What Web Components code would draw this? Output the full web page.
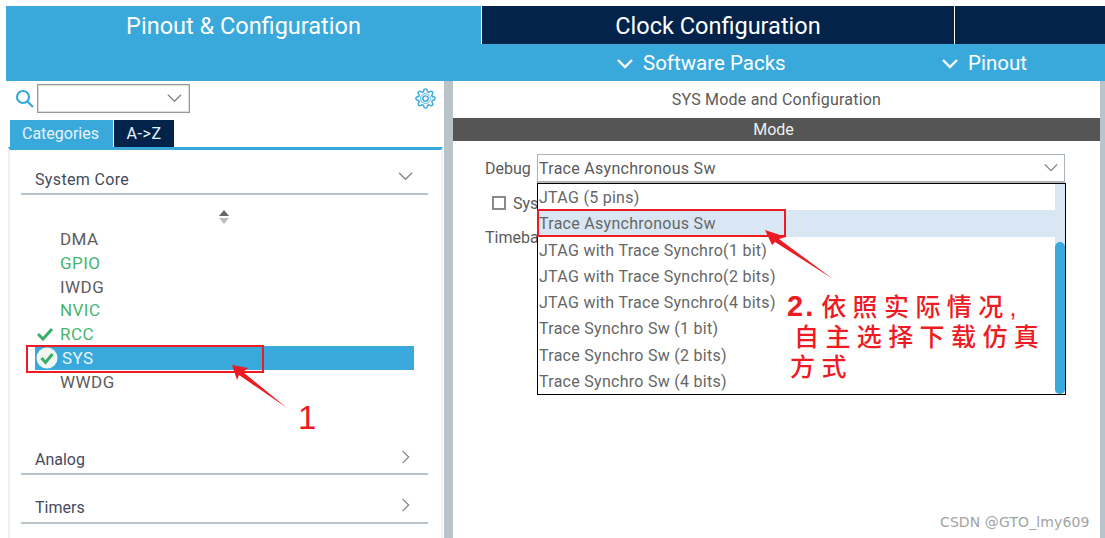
<!DOCTYPE html>
<html lang="en">
<head>
<meta charset="utf-8">
<title>SYS Mode and Configuration</title>
<style>
  html, body { margin: 0; height: 100%; background: #fff; overflow: hidden; }
</style>
</head>
<body>
<cube-app>
  <top-tabs slot="top"></top-tabs>
  <side-panel slot="left"></side-panel>
  <mode-panel slot="right"></mode-panel>
</cube-app>
<note-layer></note-layer>

<script>
const chevron = (size, color, dir = 'down', width = 1.5) => {
  const d = dir === 'down' ? 'M1 4l7 7 7-7' : 'M4 1l7 7-7 7'
  return `<svg width="${size}" height="${size}" viewBox="0 0 16 16" fill="none" stroke="${color}" stroke-width="${width}"><path d="${d}"/></svg>`
}

class CubeApp extends HTMLElement {
  constructor () {
    super()
    this.shadow = this.attachShadow({ mode: 'open' })
  }

  connectedCallback () {
    this.shadow.innerHTML = /* html */`
      <style>
        :host {
          display: flex;
          flex-direction: column;
          box-sizing: border-box;
          width: 1105px;
          height: 538px;
          padding: 6px 0 0 6px;
          font-family: Roboto, "Liberation Sans", sans-serif;
        }
        .main { display: flex; flex: 1; min-height: 0; }
        .split { width: 9px; background: #b8c3ca; flex: none; }
        .edge { width: 5px; background: #b8c3ca; flex: none; }
      </style>
      <slot name="top"></slot>
      <div class="main">
        <slot name="left"></slot>
        <div class="split"></div>
        <slot name="right"></slot>
        <div class="edge"></div>
      </div>
    `
  }
}

class TopTabs extends HTMLElement {
  constructor () {
    super()
    this.shadow = this.attachShadow({ mode: 'open' })
  }

  connectedCallback () {
    this.shadow.innerHTML = /* html */`
      <style>
        :host {
          display: grid;
          grid-template-columns: 475px 473px 1fr;
          grid-template-rows: 38px 37px;
          background: #39a9dc;
          color: #fff;
          flex: none;
        }
        .tab {
          display: flex;
          align-items: flex-start;
          justify-content: center;
          padding-top: 6px;
          box-sizing: border-box;
          font-size: 23.5px;
          line-height: 28px;
        }
        .dark { background: #03234b; }
        .first { grid-row: 1 / 3; }
        .line { border-left: 1px solid #fff; }
        .packs {
          grid-column: 2 / 4;
          display: grid;
          grid-template-columns: 300px 1fr;
          font-size: 20.5px;
          line-height: 37px;
          padding-left: 136px;
        }
        .pack { display: flex; align-items: center; gap: 10px; padding-top: 1px; }
        .pack + .pack { padding-left: 25px; }
      </style>
      <div class="tab first"><span>Pinout &amp; Configuration</span></div>
      <div class="tab dark line"><span>Clock Configuration</span></div>
      <div class="tab dark line"></div>
      <div class="packs">
        <div class="pack">${chevron(16, '#fff', 'down', 2.4)}<span>Software Packs</span></div>
        <div class="pack">${chevron(16, '#fff', 'down', 2.4)}<span>Pinout</span></div>
      </div>
    `
  }
}

class SidePanel extends HTMLElement {
  constructor () {
    super()
    this.shadow = this.attachShadow({ mode: 'open' })
  }

  connectedCallback () {
    const groups = ['DMA', 'GPIO', 'IWDG', 'NVIC', 'RCC', 'SYS', 'WWDG']
    const green = ['GPIO', 'NVIC', 'RCC']
    this.shadow.innerHTML = /* html */`
      <style>
        :host {
          display: block;
          width: 438px;
          flex: none;
          color: #555;
          font-size: 16px;
          overflow: hidden;
        }
        .search { display: flex; align-items: center; height: 29px; margin-top: 3px; padding: 0 8px 0 9px; }
        .lens { flex: none; width: 19px; height: 19px; margin-right: 3px; }
        .combo {
          width: 153px; height: 29px; box-sizing: border-box;
          border: 1px solid #999; box-shadow: inset 0 0 0 1px #ddd;
          display: flex; align-items: center; justify-content: flex-end; padding-right: 7px;
        }
        .gear { margin-left: auto; }
        .tabs { display: flex; margin: 7px 0 0 4px; height: 27px; gap: 1px; font-size: 16px; }
        .tabs div { display: flex; align-items: center; justify-content: center; color: #e8f4fb; }
        .cat { width: 103px; background: #39a9dc; padding-right: 2px; box-sizing: border-box; }
        .az { width: 60px; background: #03234b; letter-spacing: .6px; }
        .box {
          margin-left: 2px; margin-right: 1px;
          border-top: 3px solid #39a9dc;
          border-left: 2px solid #f1f1f1;
          border-right: 2px solid #f1f1f1;
          padding: 0 13px 0 11px;
          height: 388px;
        }
        .head {
          display: flex; justify-content: space-between; align-items: flex-end;
          box-sizing: border-box;
          border-bottom: 2px solid #b8c3ca;
          padding: 0 15px 4px 14px;
          color: #454a5c;
          line-height: 19px;
        }
        .head svg { margin-bottom: 5px; }
        .sys { height: 45px; }
        .sys span { letter-spacing: .35px; }
        .analog { height: 33px; margin-top: 48px; }
        .timers { height: 33px; margin-top: 16px; padding-bottom: 5px; }
        .arrows { display: flex; justify-content: center; padding-top: 15px; height: 17px; margin-left: -2px; }
        ul { list-style: none; margin: 0; padding: 0 0 0 14px; width: 379px; font-size: 17px; letter-spacing: .45px; }
        li {
          height: 23.8px; box-sizing: border-box; padding-top: 2px; line-height: 21.8px;
          display: flex; align-items: center; position: relative; padding-left: 25px; color: #5d5d5d;
        }
        li.green { color: #45b56f; }
        li.sel { background: #39a9dc; color: #eaf6fc; padding-left: 27px; }
        li svg { position: absolute; left: 0; margin-top: -2px; }
      </style>
      <div class="search">
        <svg class="lens" viewBox="0 0 19 19" fill="none" stroke="#39a9dc" stroke-width="2.2"><circle cx="8" cy="8" r="6"/><path d="M12.5 12.5L18 18"/></svg>
        <div class="combo">${chevron(15, '#888')}</div>
        <svg class="gear" width="21" height="21" viewBox="0 0 24 24" fill="none" stroke="#39a9dc" stroke-width="1.7"><circle cx="12" cy="12" r="3"/><circle cx="12" cy="12" r="5.6" stroke-width="1"/><path d="M19.4 15a1.65 1.65 0 0 0 .33 1.82l.06.06a2 2 0 0 1 0 2.83 2 2 0 0 1-2.83 0l-.06-.06a1.65 1.65 0 0 0-1.82-.33 1.65 1.65 0 0 0-1 1.51V21a2 2 0 0 1-2 2 2 2 0 0 1-2-2v-.09A1.65 1.65 0 0 0 9 19.4a1.65 1.65 0 0 0-1.82.33l-.06.06a2 2 0 0 1-2.83 0 2 2 0 0 1 0-2.83l.06-.06a1.65 1.65 0 0 0 .33-1.82 1.65 1.65 0 0 0-1.51-1H3a2 2 0 0 1-2-2 2 2 0 0 1 2-2h.09A1.65 1.65 0 0 0 4.6 9a1.65 1.65 0 0 0-.33-1.82l-.06-.06a2 2 0 0 1 0-2.83 2 2 0 0 1 2.83 0l.06.06a1.65 1.65 0 0 0 1.82.33H9a1.65 1.65 0 0 0 1-1.51V3a2 2 0 0 1 2-2 2 2 0 0 1 2 2v.09a1.65 1.65 0 0 0 1 1.51 1.65 1.65 0 0 0 1.82-.33l.06-.06a2 2 0 0 1 2.83 0 2 2 0 0 1 0 2.83l-.06.06a1.65 1.65 0 0 0-.33 1.82V9a1.65 1.65 0 0 0 1.51 1H21a2 2 0 0 1 2 2 2 2 0 0 1-2 2h-.09a1.65 1.65 0 0 0-1.51 1z"/></svg>
      </div>
      <div class="tabs"><div class="cat">Categories</div><div class="az">A-&gt;Z</div></div>
      <div class="box">
        <div class="head sys"><span>System Core</span>${chevron(15, '#888')}</div>
        <div class="arrows">
          <svg width="10" height="14" viewBox="0 0 10 14"><path d="M5 0l5 6H0z" fill="#666"/><path d="M5 14l5-6H0z" fill="#bbb"/></svg>
        </div>
        <ul>
          ${groups.map(name => {
            const cls = [green.includes(name) ? 'green' : '', name === 'SYS' ? 'sel' : ''].join(' ')
            let icon = ''
            if (name === 'RCC') icon = '<svg width="16" height="14" viewBox="0 0 16 14" style="left:2px" fill="none" stroke="#3dae69" stroke-width="3"><path d="M1 7l5 5 9-10"/></svg>'
            if (name === 'SYS') icon = '<svg width="22" height="22" viewBox="0 0 22 22" style="left:1px"><circle cx="11" cy="11" r="10.5" fill="#f2f7f3"/><path d="M5.500 11l4 4.500 7-8.500" fill="none" stroke="#3dae69" stroke-width="3"/></svg>'
            return `<li class="${cls}">${icon}<span>${name}</span></li>`
          }).join('')}
        </ul>
        <div class="head analog"><span>Analog</span>${chevron(14, '#888', 'right')}</div>
        <div class="head timers"><span>Timers</span>${chevron(14, '#888', 'right')}</div>
      </div>
    `
  }
}

class OptionList extends HTMLElement {
  constructor () {
    super()
    this.shadow = this.attachShadow({ mode: 'open' })
  }

  connectedCallback () {
    const options = [
      'JTAG (5 pins)',
      'Trace Asynchronous Sw',
      'JTAG with Trace Synchro(1 bit)',
      'JTAG with Trace Synchro(2 bits)',
      'JTAG with Trace Synchro(4 bits)',
      'Trace Synchro Sw (1 bit)',
      'Trace Synchro Sw (2 bits)',
      'Trace Synchro Sw (4 bits)'
    ]
    this.shadow.innerHTML = /* html */`
      <style>
        :host {
          position: absolute;
          left: 84px;
          top: 102px;
          width: 529px;
          height: 212px;
          box-sizing: border-box;
          border: 1px solid #000;
          background: #fff;
          z-index: 5;
          display: block;
          color: #666;
          font-size: 16px;
          letter-spacing: .28px;
        }
        .row { height: 26.25px; line-height: 28px; padding-left: 1px; white-space: nowrap; position: relative; }
        .row.on { background: #d9e7f4; }
        .track { position: absolute; right: 0; top: 0; bottom: 0; width: 10px; background: #d9e7f4; }
        .thumb { position: absolute; right: 0; top: 58px; bottom: 0; width: 10px; background: #39a9dc; border-radius: 5px; }
      </style>
      <div class="track"><div class="thumb"></div></div>
      ${options.map((text, i) => `<div class="row${i === 1 ? ' on' : ''}">${text}</div>`).join('')}
    `
  }
}

class ModePanel extends HTMLElement {
  constructor () {
    super()
    this.shadow = this.attachShadow({ mode: 'open' })
  }

  connectedCallback () {
    this.shadow.innerHTML = /* html */`
      <style>
        :host {
          display: block;
          position: relative;
          flex: 1;
          min-width: 0;
          color: #5a5a5a;
          font-size: 16px;
        }
        h2 { margin: 0; font: inherit; height: 37px; line-height: 37px; text-align: center; letter-spacing: .2px; }
        .bar { height: 23px; line-height: 23px; background: #555; color: #f0f0f0; text-align: center; padding-right: 6px; }
        .form { padding: 13px 0 0 32px; }
        .debug { display: flex; align-items: center; height: 28px; }
        .debug label { width: 52px; flex: none; }
        .select {
          width: 528px; height: 28px; box-sizing: border-box;
          border: 1px solid #aab4bc; box-shadow: 0 1px 0 #bbb;
          display: flex; align-items: center; justify-content: space-between;
          padding: 0 6px 0 1px; letter-spacing: .28px;
        }
        .check { display: flex; align-items: center; gap: 7px; height: 16px; margin: 13px 0 0 7px; }
        .box { width: 14px; height: 14px; box-sizing: border-box; border: 2px solid #8a8a8a; }
        .base { margin-top: 17px; line-height: 20px; }
      </style>
      <h2>SYS Mode and Configuration</h2>
      <div class="bar">Mode</div>
      <div class="form">
        <div class="debug">
          <label>Debug</label>
          <div class="select"><span>Trace Asynchronous Sw</span>${chevron(14, '#888')}</div>
        </div>
        <div class="check"><div class="box"></div><span>Sys</span></div>
        <div class="base">Timeba</div>
      </div>
      <option-list></option-list>
    `
  }
}

class NoteLayer extends HTMLElement {
  constructor () {
    super()
    this.shadow = this.attachShadow({ mode: 'open' })
  }

  connectedCallback () {
    this.shadow.innerHTML = /* html */`
      <style>
        :host { position: absolute; left: 0; top: 0; width: 1105px; height: 538px; display: block; z-index: 10; pointer-events: none; }
        svg { position: absolute; left: 0; top: 0; }
        .note { position: absolute; color: #ed1c24; white-space: nowrap; }
        .one { left: 298px; top: 401px; font: 33px/34px "Liberation Sans", sans-serif; }
        .cn {
          font: 500 25px/31px "Liberation Sans", "Noto Sans CJK SC", sans-serif;
          letter-spacing: 6.4px;
        }
        .cn b { font: 700 29px/31px "Liberation Sans", sans-serif; letter-spacing: 2px; margin-right: 6px; }
        .mark { position: absolute; left: 940px; top: 513px; font: 14px/18px "DejaVu Sans", sans-serif; letter-spacing: .1px; color: #a3a3a3; white-space: nowrap; }
      </style>
      <svg width="1105" height="538" fill="none">
        <rect x="27" y="346" width="236" height="26" stroke="#ed1c24" stroke-width="2"/>
        <rect x="538" y="210" width="247" height="26" stroke="#ed1c24" stroke-width="2"/>
        <path d="M232 365L248 368L243 372L287 408L239 375L237 380Z" fill="#ed1c24"/>
        <path d="M765 230L786 237L779 239L833 279L775 242L772 245Z" fill="#ed1c24"/>
      </svg>
      <div class="note one">1</div>
      <div class="note cn" style="left:787px;top:291px"><b>2.</b>依照实际情况,</div>
      <div class="note cn" style="left:794px;top:322px">自主选择下载仿真</div>
      <div class="note cn" style="left:790px;top:352px">方式</div>
      <div class="mark">CSDN @GTO_lmy609</div>
    `
  }
}

customElements.define('cube-app', CubeApp)
customElements.define('top-tabs', TopTabs)
customElements.define('side-panel', SidePanel)
customElements.define('option-list', OptionList)
customElements.define('mode-panel', ModePanel)
customElements.define('note-layer', NoteLayer)
</script>
</body>
</html>
